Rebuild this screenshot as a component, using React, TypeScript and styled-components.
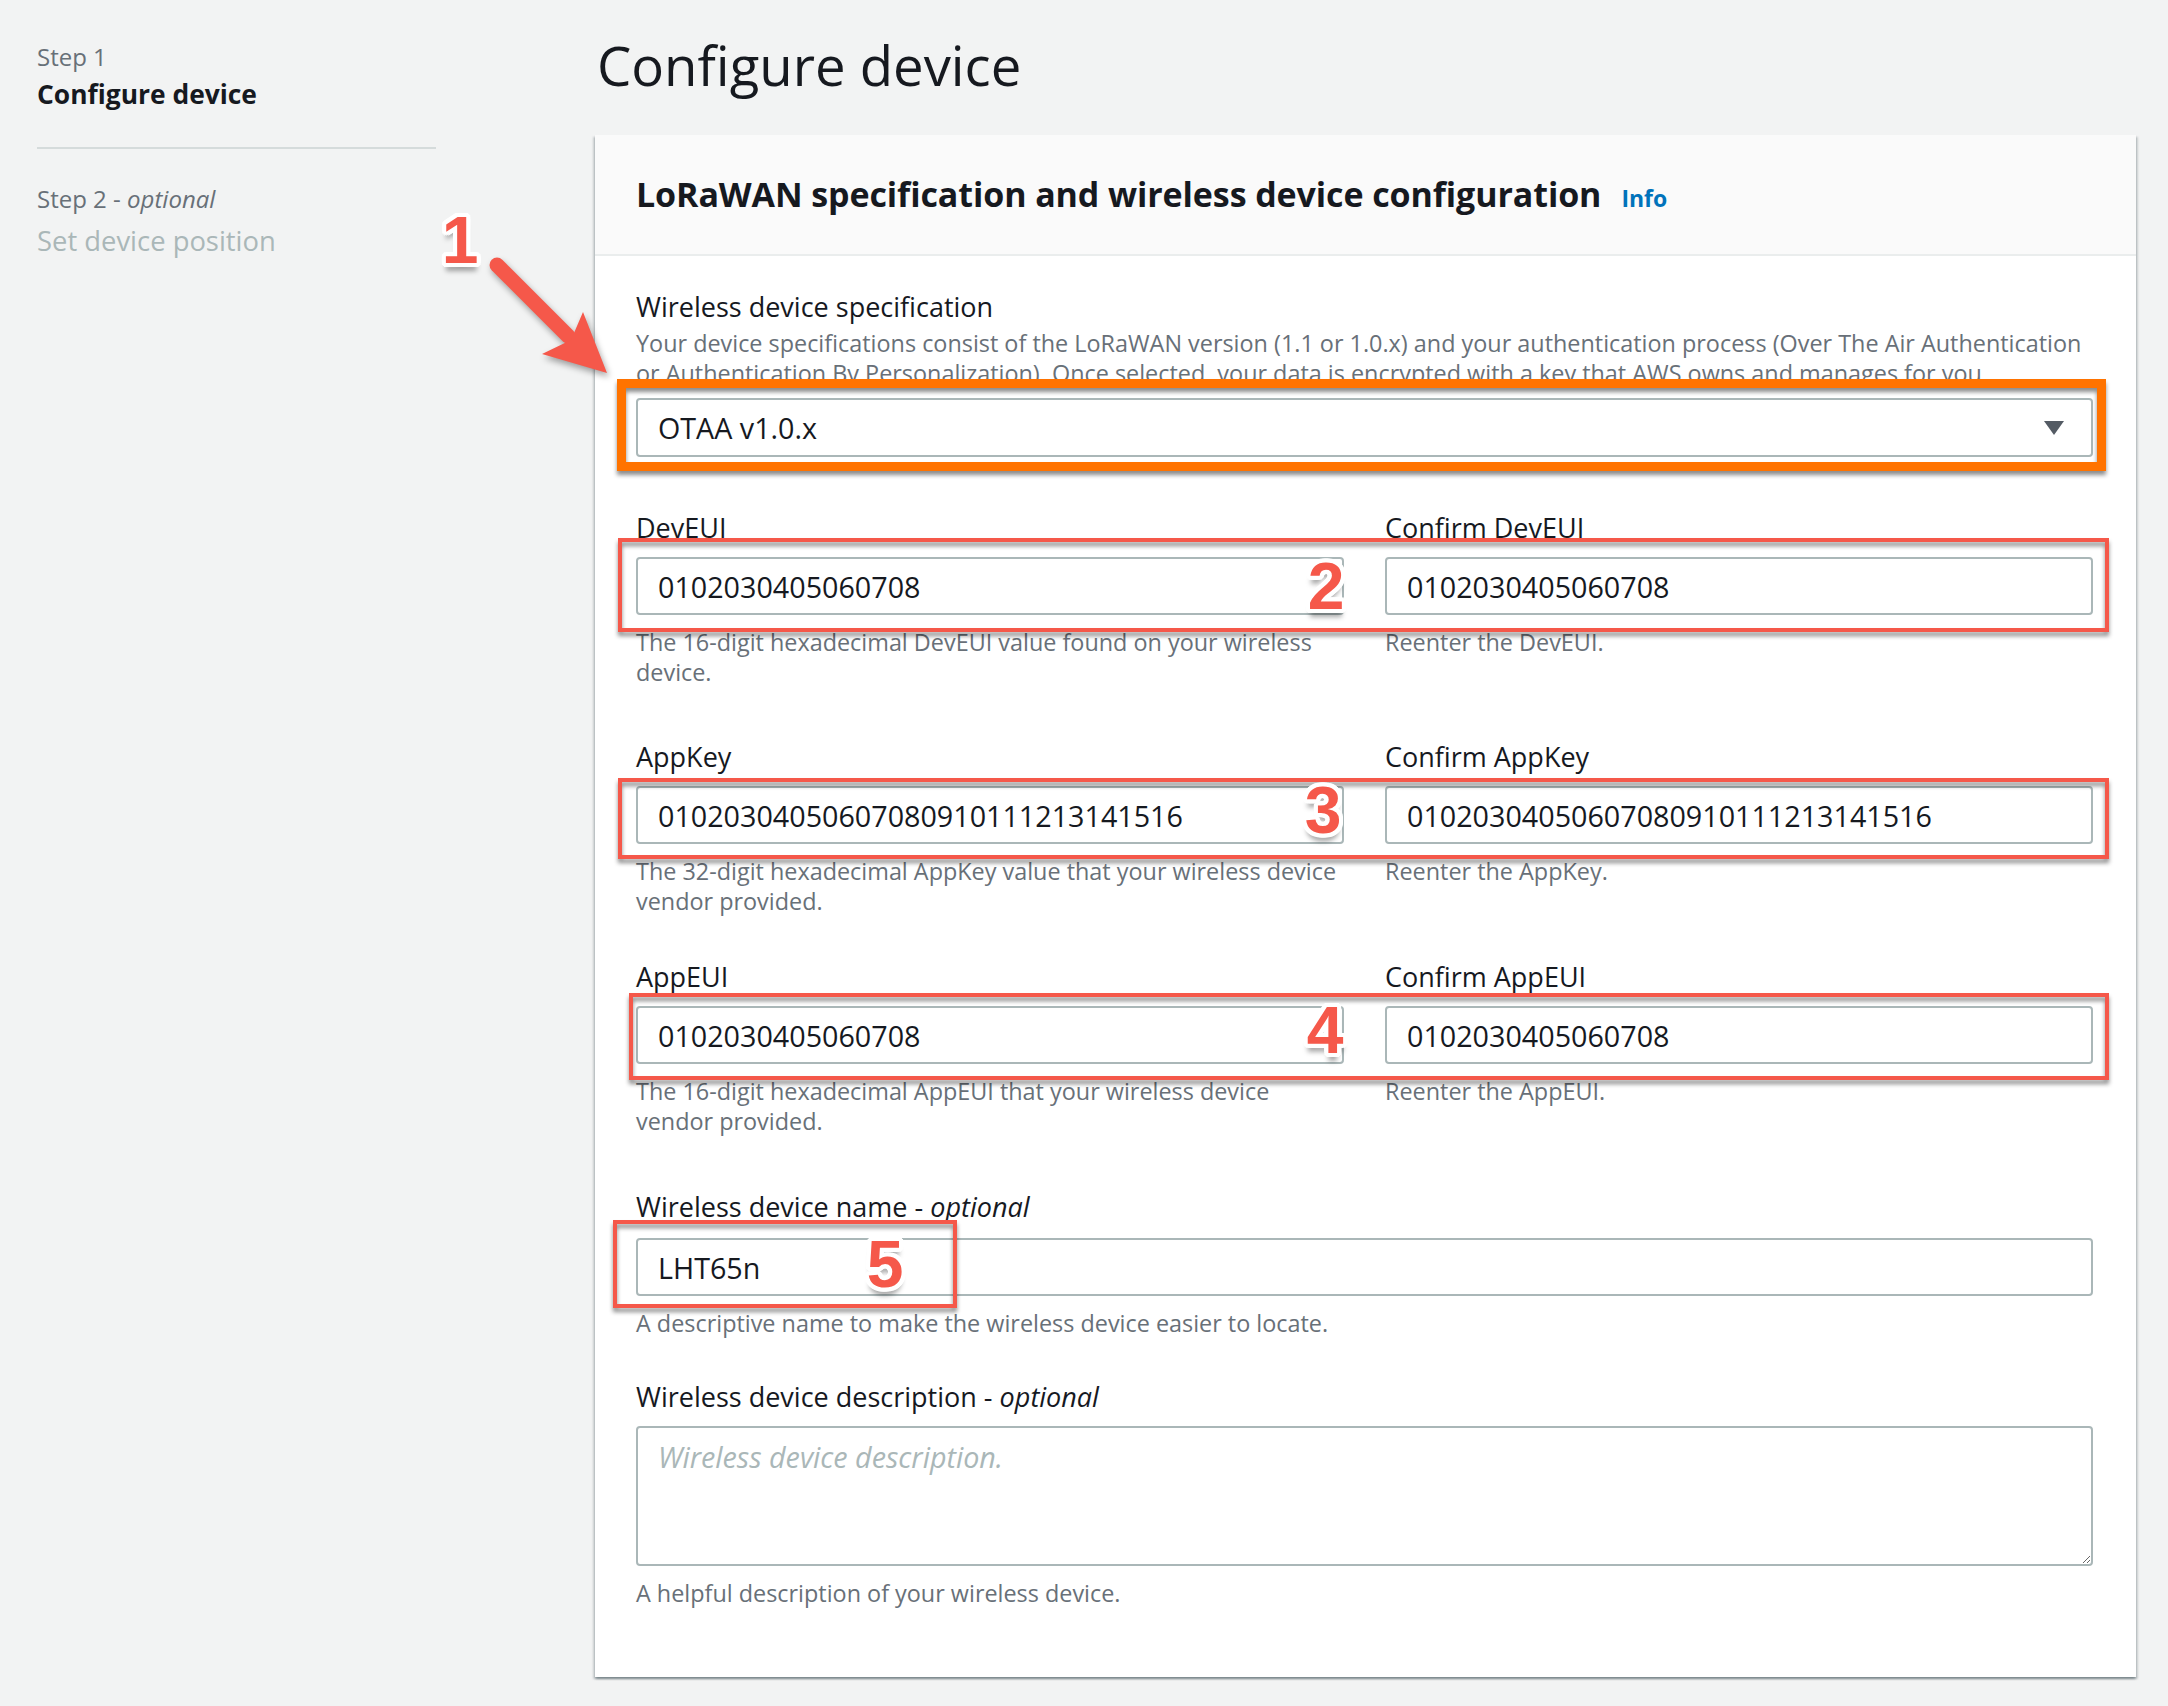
import React from "react";
import styled, { createGlobalStyle } from "styled-components";

const GlobalStyle = createGlobalStyle`
  html, body {
    margin: 0;
    padding: 0;
    background: #f2f3f3;
  }
  body {
    font-family: "Open Sans", "Noto Sans", sans-serif;
    color: #16191f;
  }
  * {
    box-sizing: border-box;
  }
`;

const coral = "#f5584a";
const orange = "#ff7300";

const Page = styled.div`
  position: relative;
  display: flex;
  width: 2168px;
  min-height: 1706px;
`;

const Sidebar = styled.nav`
  width: 399px;
  margin-left: 37px;
  margin-right: 159px;
  padding-top: 41px;
`;

const StepCaption = styled.div`
  font-size: 24px;
  line-height: 31px;
  color: #687078;
`;

const StepTitle = styled.div<{ $active?: boolean }>`
  margin-top: ${({ $active }) => ($active ? "1px" : "5px")};
  font-size: ${({ $active }) => ($active ? "26.4px" : "27.4px")};
  line-height: 43px;
  font-weight: ${({ $active }) => ($active ? 700 : 400)};
  color: ${({ $active }) => ($active ? "#16191f" : "#aab7b8")};
`;

const StepDivider = styled.hr`
  border: 0;
  border-top: 2px solid #d5dbdb;
  margin: 31px 0 34px;
`;

const Main = styled.main`
  width: 1541px;
  padding-top: 30px;
`;

const PageTitle = styled.h1`
  margin: 0 0 35px 2px;
  font-size: 54.5px;
  line-height: 70px;
  font-weight: 400;
  color: #16191f;
`;

const Card = styled.section`
  background: #fff;
  box-shadow: 0 2px 2px rgba(0, 28, 36, 0.3), 2px 2px 2px rgba(0, 28, 36, 0.15),
    -2px 2px 2px rgba(0, 28, 36, 0.15);
`;

const CardHeader = styled.header`
  display: flex;
  align-items: baseline;
  gap: 20px;
  padding: 38px 41px;
  background: #fafafa;
  border-bottom: 2px solid #eaeded;
`;

const CardTitle = styled.h2`
  margin: 0;
  font-size: 34px;
  line-height: 43px;
  font-weight: 700;
  letter-spacing: -0.1px;
`;

const InfoLink = styled.a`
  font-size: 23px;
  font-weight: 700;
  color: #0073bb;
  text-decoration: none;
`;

const CardBody = styled.div`
  padding: 29px 43px 69px 41px;
`;

const Field = styled.div<{ $gap?: number }>`
  margin-top: ${({ $gap }) => $gap ?? 0}px;
`;

const FieldRow = styled.div<{ $gap?: number }>`
  display: grid;
  grid-template-columns: 1fr 1fr;
  column-gap: 41px;
  margin-top: ${({ $gap }) => $gap ?? 0}px;
`;

const Label = styled.label`
  display: block;
  font-size: 27px;
  line-height: 43px;
  color: #16191f;

  i {
    font-style: italic;
  }
`;

const Description = styled.div<{ $above?: boolean }>`
  font-size: 23.4px;
  line-height: 30px;
  color: #687078;
  margin-top: ${({ $above }) => ($above ? "0" : "12px")};
`;

const TextInput = styled.input<{ $offset?: number }>`
  display: block;
  width: 100%;
  height: 58px;
  margin-top: ${({ $offset }) => 8 + ($offset ?? 0)}px;
  padding: 0 20px;
  font-family: inherit;
  font-size: 28.7px;
  color: #16191f;
  background: #fff;
  border: 2px solid #aab7b8;
  border-radius: 4px;
  outline: none;
`;

const SelectBox = styled.div`
  display: flex;
  align-items: center;
  justify-content: space-between;
  height: 59px;
  margin-top: 10px;
  padding: 0 26px 0 20px;
  font-size: 28.7px;
  background: #fff;
  border: 2px solid #aab7b8;
  border-radius: 4px;
`;

const TextArea = styled.textarea`
  display: block;
  width: 100%;
  height: 140px;
  margin-top: 8px;
  padding: 8px 20px;
  font-family: inherit;
  font-size: 28.7px;
  line-height: 42px;
  border: 2px solid #aab7b8;
  border-radius: 4px;
  outline: none;

  &::placeholder {
    color: #aab7b8;
    font-style: italic;
  }
`;

/* screenshot annotations laid over the form */
const Frame = styled.div<{ $x: number; $y: number; $w: number; $h: number; $color: string; $weight: number }>`
  position: absolute;
  left: ${({ $x }) => $x}px;
  top: ${({ $y }) => $y}px;
  width: ${({ $w }) => $w}px;
  height: ${({ $h }) => $h}px;
  border: ${({ $weight, $color }) => `${$weight}px solid ${$color}`};
  filter: drop-shadow(0 4px 2px rgba(0, 0, 0, 0.45));
  pointer-events: none;
`;

const Badge = styled.span<{ $x: number; $y: number }>`
  position: absolute;
  left: ${({ $x }) => $x}px;
  top: ${({ $y }) => $y}px;
  transform: translate(-50%, -50%);
  font-family: "Liberation Sans", Arial, sans-serif;
  font-weight: 700;
  font-size: 66px;
  line-height: 1;
  color: ${coral};
  text-shadow: 4px 0 0 #fff, -4px 0 0 #fff, 0 4px 0 #fff, 0 -4px 0 #fff,
    3px 3px 0 #fff, -3px -3px 0 #fff, 3px -3px 0 #fff, -3px 3px 0 #fff,
    4px 2px 0 #fff, -4px 2px 0 #fff, 4px -2px 0 #fff, -4px -2px 0 #fff,
    2px 4px 0 #fff, -2px 4px 0 #fff, 2px -4px 0 #fff, -2px -4px 0 #fff,
    0 8px 5px rgba(0, 0, 0, 0.35);
  pointer-events: none;
`;

const ArrowSvg = styled.svg`
  position: absolute;
  left: 480px;
  top: 250px;
  overflow: visible;
  filter: drop-shadow(2px 4px 3px rgba(0, 0, 0, 0.35));
  pointer-events: none;
`;

const Caret = () => (
  <svg width="22" height="16" viewBox="0 0 22 16">
    <path d="M1 1h20L11 15z" fill="#545b64" />
  </svg>
);

const frames = [
  { x: 618, y: 538, w: 1491, h: 94 },
  { x: 618, y: 778, w: 1491, h: 81 },
  { x: 629, y: 993, w: 1480, h: 87 },
  { x: 613, y: 1220, w: 344, h: 88 }
];

const badges = [
  { n: 1, x: 460, y: 240 },
  { n: 2, x: 1326, y: 586 },
  { n: 3, x: 1323, y: 810 },
  { n: 4, x: 1325, y: 1030 },
  { n: 5, x: 885, y: 1264 }
];

const pairs = [
  {
    label: "DevEUI",
    value: "0102030405060708",
    help: "The 16-digit hexadecimal DevEUI value found on your wireless device.",
    confirmHelp: "Reenter the DevEUI.",
    gap: 49
  },
  {
    label: "AppKey",
    value: "01020304050607080910111213141516",
    help: "The 32-digit hexadecimal AppKey value that your wireless device vendor provided.",
    confirmHelp: "Reenter the AppKey.",
    gap: 48
  },
  {
    label: "AppEUI",
    value: "0102030405060708",
    help: "The 16-digit hexadecimal AppEUI that your wireless device vendor provided.",
    confirmHelp: "Reenter the AppEUI.",
    gap: 39
  }
];

const App: React.FC = () => (
  <Page>
    <GlobalStyle />
    <Sidebar>
      <StepCaption>Step 1</StepCaption>
      <StepTitle $active>Configure device</StepTitle>
      <StepDivider />
      <StepCaption>
        Step 2 - <i>optional</i>
      </StepCaption>
      <StepTitle>Set device position</StepTitle>
    </Sidebar>

    <Main>
      <PageTitle>Configure device</PageTitle>
      <Card>
        <CardHeader>
          <CardTitle>LoRaWAN specification and wireless device configuration</CardTitle>
          <InfoLink href="#">Info</InfoLink>
        </CardHeader>
        <CardBody>
          <Field>
            <Label>Wireless device specification</Label>
            <Description $above>
              Your device specifications consist of the LoRaWAN version (1.1 or 1.0.x) and your
              authentication process (Over The Air Authentication
              <br />
              or Authentication By Personalization). Once selected, your data is encrypted with a key
              that AWS owns and manages for you.
            </Description>
            <SelectBox>
              <span>OTAA v1.0.x</span>
              <Caret />
            </SelectBox>
          </Field>

          {pairs.map(p => (
            <FieldRow key={p.label} $gap={p.gap}>
              <div>
                <Label>{p.label}</Label>
                <TextInput readOnly defaultValue={p.value} />
                <Description>{p.help}</Description>
              </div>
              <div>
                <Label>Confirm {p.label}</Label>
                <TextInput readOnly defaultValue={p.value} />
                <Description>{p.confirmHelp}</Description>
              </div>
            </FieldRow>
          ))}

          <Field $gap={49}>
            <Label>
              Wireless device name - <i>optional</i>
            </Label>
            <TextInput readOnly defaultValue="LHT65n" $offset={2} />
            <Description>A descriptive name to make the wireless device easier to locate.</Description>
          </Field>

          <Field $gap={37}>
            <Label>
              Wireless device description - <i>optional</i>
            </Label>
            <TextArea placeholder="Wireless device description." />
            <Description>A helpful description of your wireless device.</Description>
          </Field>
        </CardBody>
      </Card>
    </Main>

    <Frame $x={617} $y={379} $w={1489} $h={92} $color={orange} $weight={9} />
    {frames.map(f => (
      <Frame key={f.y} $x={f.x} $y={f.y} $w={f.w} $h={f.h} $color={coral} $weight={4} />
    ))}
    <ArrowSvg width="140" height="140" viewBox="0 0 140 140">
      <line x1="17" y1="15" x2="88" y2="86" stroke={coral} strokeWidth="15" strokeLinecap="round" />
      <path d="M127 123 L103 62 L91 90 L62 104 Z" fill={coral} />
    </ArrowSvg>
    {badges.map(b => (
      <Badge key={b.n} $x={b.x} $y={b.y}>
        {b.n}
      </Badge>
    ))}
  </Page>
);

export default App;
